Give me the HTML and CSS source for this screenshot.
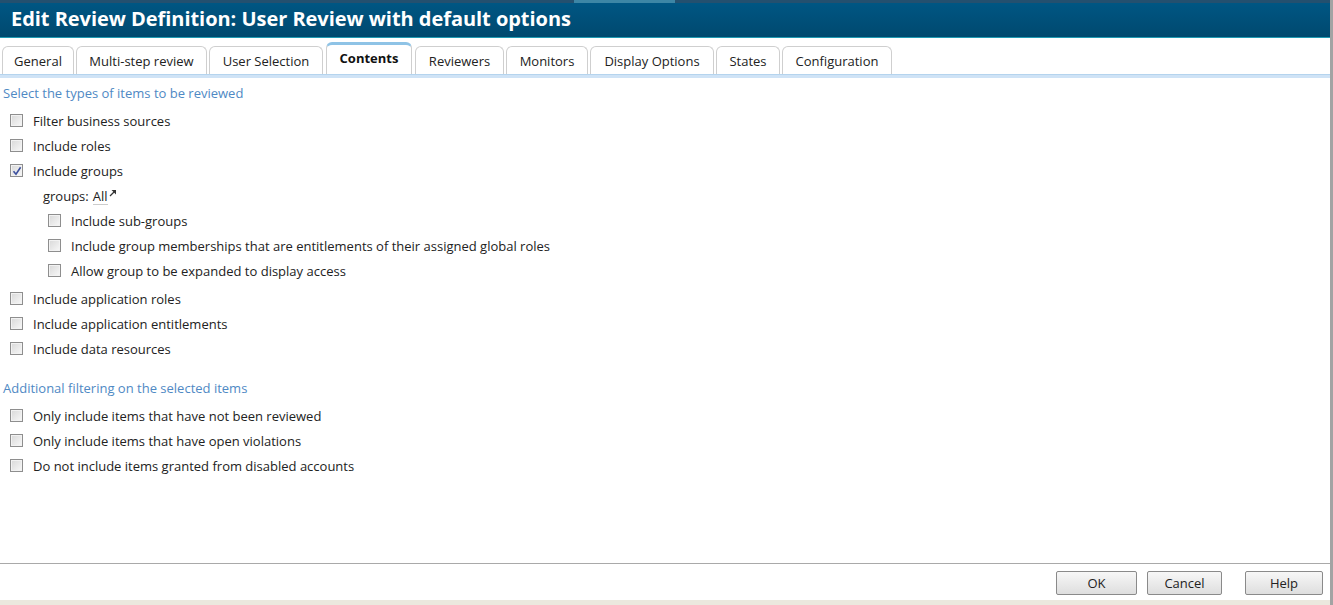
FILE: index.html
```html
<!DOCTYPE html>
<html>
<head>
<meta charset="utf-8">
<link rel="stylesheet" href="styles.css">
</head>
<body>
<div class="page">
  <div class="topstrip"><span class="seg-a"></span><span class="seg-b"></span><span class="seg-c"></span></div>
  <header class="titlebar"><h1>Edit Review Definition: User Review with default options</h1></header>
  <nav class="tabs">
    <div class="tab t-general">General</div>
    <div class="tab t-multi">Multi-step review</div>
    <div class="tab t-user">User Selection</div>
    <div class="tab active t-contents">Contents</div>
    <div class="tab t-reviewers">Reviewers</div>
    <div class="tab t-monitors">Monitors</div>
    <div class="tab t-display">Display Options</div>
    <div class="tab t-states">States</div>
    <div class="tab t-config">Configuration</div>
  </nav>
  <div class="tabband"></div>
  <main class="content">
    <div class="section-title">Select the types of items to be reviewed</div>
    <div class="row"><span class="cb"></span><span>Filter business sources</span></div>
    <div class="row"><span class="cb"></span><span>Include roles</span></div>
    <div class="row"><span class="cb checked"><svg width="10" height="10" viewBox="0 0 10 10"><path d="M1.5 5.2 L4 8.2 L8.6 1.2" fill="none" stroke="#3b4f9e" stroke-width="1.6"/></svg></span><span>Include groups</span></div>
    <div class="groups-line">groups: <span class="all">All</span><svg class="arrow" width="8" height="8" viewBox="0 0 8 8"><path d="M1 7 L6.5 1.5" stroke="#333" stroke-width="1.3"/><path d="M2.5 1 L7 1 L7 5.5 Z" fill="#333"/></svg></div>
    <div class="sub">
      <div class="row"><span class="cb"></span><span>Include sub-groups</span></div>
      <div class="row"><span class="cb"></span><span>Include group memberships that are entitlements of their assigned global roles</span></div>
      <div class="row"><span class="cb"></span><span>Allow group to be expanded to display access</span></div>
    </div>
    <div class="row"><span class="cb"></span><span>Include application roles</span></div>
    <div class="row"><span class="cb"></span><span>Include application entitlements</span></div>
    <div class="row"><span class="cb"></span><span>Include data resources</span></div>
    <div class="section-title second">Additional filtering on the selected items</div>
    <div class="row"><span class="cb"></span><span>Only include items that have not been reviewed</span></div>
    <div class="row"><span class="cb"></span><span>Only include items that have open violations</span></div>
    <div class="row"><span class="cb"></span><span>Do not include items granted from disabled accounts</span></div>
  </main>
  <footer class="footer">
    <button class="btn b-ok">OK</button>
    <button class="btn b-cancel">Cancel</button>
    <button class="btn b-help">Help</button>
  </footer>
  <div class="bottomstrip"></div>
</div>
</body>
</html>
```
FILE: styles.css
```css
html, body {
  margin: 0;
  padding: 0;
  background: #fff;
}
body {
  font-family: "Open Sans", "DejaVu Sans", sans-serif;
  font-size: 13px;
  color: #222;
}
.page {
  width: 1330px;
  height: 605px;
  border-right: 3px solid #a3a3a3;
  display: flex;
  flex-direction: column;
  overflow: hidden;
}
.topstrip {
  height: 3px;
  display: flex;
  background: #24506f;
  flex: none;
}
.topstrip .seg-a { width: 574px; }
.topstrip .seg-b { width: 101px; background: #3d86a6; }
.topstrip .seg-c { flex: 1; }
.titlebar {
  height: 35px;
  box-sizing: border-box;
  padding: 0 0 2px 11px;
  background: linear-gradient(#005683, #00496f);
  border-bottom: 1px solid #1f9bb3;
  display: flex;
  align-items: center;
  flex: none;
}
.titlebar h1 {
  margin: 0;
  font-size: 20px;
  font-weight: 700;
  color: #fff;
  letter-spacing: -0.04px;
  line-height: 26px;
}
.tabs {
  display: flex;
  align-items: flex-end;
  gap: 2px;
  padding: 0 0 0 2px;
  height: 36px;
  flex: none;
}
.tab {
  height: 28px;
  border: 1px solid #cfcfcf;
  border-bottom: none;
  border-radius: 6px 6px 0 0;
  display: flex;
  align-items: center;
  justify-content: center;
  color: #222;
  box-sizing: border-box;
  background: #fff;
  flex: none;
}
.tab.active {
  height: 32px;
  font-weight: 700;
  color: #111;
  border-top: 3px solid #8ec3e6;
  border-color: #cfcfcf;
  border-top-color: #8ec3e6;
  padding-bottom: 3px;
  margin: 0 1px;
}
.t-general { width: 72px; }
.t-multi { width: 131px; }
.t-user { width: 114px; }
.t-contents { width: 86px; }
.t-reviewers { width: 89px; }
.t-monitors { width: 82px; }
.t-display { width: 124px; }
.t-states { width: 64px; }
.t-config { width: 110px; }
.tabband {
  height: 3px;
  background: #cfe3f6;
  border-top: 1px solid #b5d4ee;
  flex: none;
}
.content {
  flex: 1;
  padding: 6px 0 0 3px;
}
.section-title {
  color: #4f89c4;
  line-height: 18px;
  margin-bottom: 6px;
}
.section-title.second {
  margin-top: 18px;
}
.row {
  height: 25px;
  display: flex;
  align-items: center;
  padding-left: 7px;
}
.row > span:last-child {
  margin-left: 10px;
}
.cb {
  width: 13px;
  height: 13px;
  box-sizing: border-box;
  border: 1px solid #8e8e8e;
  background: linear-gradient(135deg, #d8d8d8, #f8f8f8);
  box-shadow: inset 0 0 0 1px #f2f2f2;
  display: flex;
  align-items: center;
  justify-content: center;
  flex: none;
}
.groups-line {
  height: 25px;
  display: flex;
  align-items: center;
  padding-left: 40px;
}
.groups-line .all {
  margin-left: 4px;
  border-bottom: 1px solid #cccccc;
  line-height: 16px;
  margin-top: 2px;
}
.groups-line .arrow {
  margin-left: 1px;
  margin-top: -6px;
}
.sub {
  padding-left: 38px;
  margin-bottom: 3px;
}
.footer {
  border-top: 1px solid #a9a9a9;
  height: 37px;
  box-sizing: border-box;
  display: flex;
  align-items: flex-start;
  justify-content: flex-end;
  padding: 7px 7px 0 0;
  flex: none;
}
.btn {
  height: 24px;
  font-family: "Open Sans", "DejaVu Sans", sans-serif;
  font-size: 13px;
  color: #222;
  border: 1px solid #8a8a8a;
  border-radius: 2px;
  background: linear-gradient(#f7f7f7, #dedede);
  padding: 0;
  margin: 0;
}
.b-ok { width: 81px; }
.b-cancel { width: 75px; margin-left: 10px; }
.b-help { width: 78px; margin-left: 23px; }
.bottomstrip {
  height: 5px;
  background: #ebe8de;
  flex: none;
}
```
